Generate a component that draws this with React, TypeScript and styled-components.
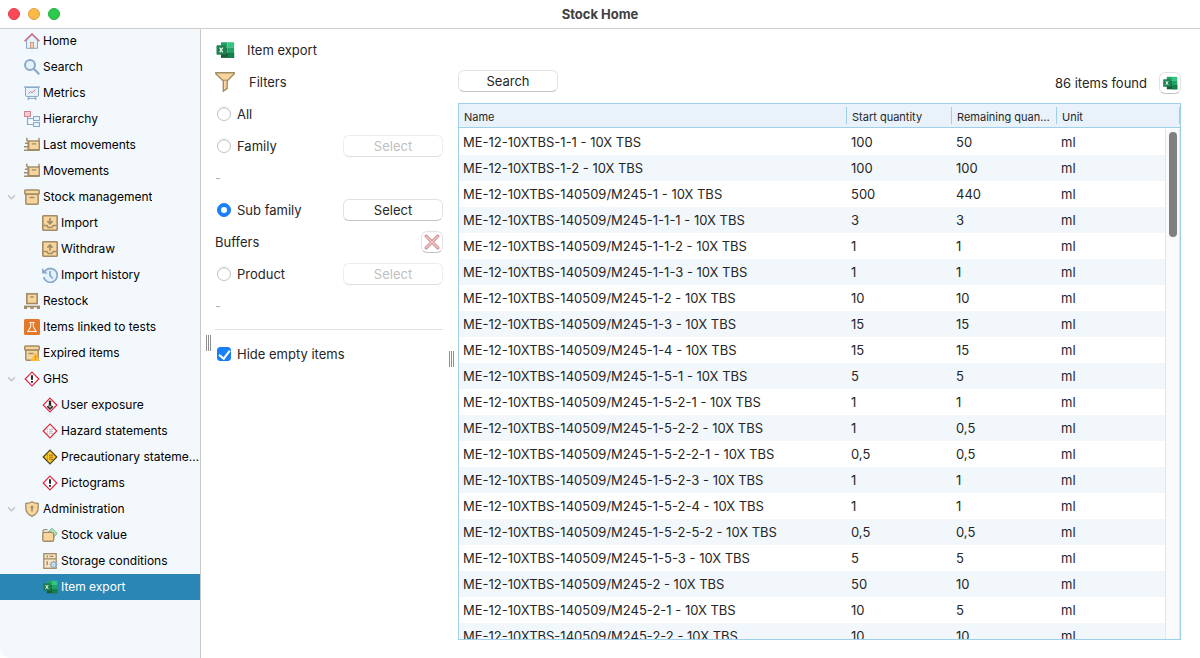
import { useState, type ReactNode } from "react";
import styled, { createGlobalStyle, css } from "styled-components";

const GlobalStyle = createGlobalStyle`
  * { box-sizing: border-box; }
  body {
    margin: 0;
    background: #ffffff;
    color: #262626;
    font-family: Inter, "Liberation Sans", sans-serif;
    font-size: 13px;
    line-height: 16px;
  }
  button, input { font: inherit; color: inherit; margin: 0; }
`;

/* ---------- window frame ---------- */

const Window = styled.div`
  display: flex;
  flex-direction: column;
  height: 100vh;
  overflow: hidden;
  border-radius: 0 0 10px 10px;
`;

const TitleBar = styled.header`
  position: relative;
  z-index: 1;
  display: grid;
  grid-template-columns: 1fr auto 1fr;
  align-items: center;
  flex: none;
  height: 28px;
  padding: 0 8px;
  background: #ffffff;
  box-shadow: 0 1px 0 #cfcfcf;
`;

const Lights = styled.div`
  display: flex;
  gap: 8px;
`;

const Light = styled.button<{ $fill: string; $edge: string }>`
  width: 12px;
  height: 12px;
  padding: 0;
  border: 1px solid ${(p) => p.$edge};
  border-radius: 50%;
  background: ${(p) => p.$fill};
`;

const WindowTitle = styled.h1`
  margin: 0;
  color: #404040;
  font-size: 13px;
  font-weight: 700;
`;

const Body = styled.div`
  display: flex;
  flex: 1;
  min-height: 0;
`;

/* ---------- sidebar ---------- */

const Sidebar = styled.nav`
  flex: none;
  width: 201px;
  border-right: 1px solid #c8c8c8;
  background: #f3f8fc;
  overflow: hidden;
`;

const NavList = styled.ul`
  margin: 0;
  padding: 0;
  list-style: none;
`;

const NavLink = styled.a<{ $nested: boolean; $active: boolean }>`
  display: flex;
  align-items: center;
  height: 26px;
  padding-left: ${(p) => (p.$nested ? 24 : 6)}px;
  color: ${(p) => (p.$active ? "#ffffff" : "#000000")};
  background: ${(p) => (p.$active ? "#2a86b5" : "transparent")};
  font-size: 12px;
  text-decoration: none;
`;

const ChevronSlot = styled.span`
  display: flex;
  flex: none;
  width: 18px;
`;

const NavText = styled.span`
  margin-left: 3px;
  overflow: hidden;
  text-overflow: ellipsis;
  white-space: nowrap;
`;

/* ---------- main area ---------- */

const Main = styled.main`
  display: flex;
  flex: 1;
  min-width: 0;
  padding: 6px 19px 6px 5px;
`;

const Content = styled.div`
  display: flex;
  flex: 1;
  flex-direction: column;
  min-width: 0;
  margin-left: 4px;
`;

const Split = styled.div`
  display: flex;
  flex: 1;
  min-height: 0;
`;

const Handle = styled.div`
  align-self: center;
  flex: none;
  width: 5px;
  height: 16px;
  border: solid #8f8f8f;
  border-width: 0 1px;
  background: linear-gradient(90deg, transparent 1px, #8f8f8f 1px, #8f8f8f 2px, transparent 2px);
  cursor: col-resize;
`;

const PageHeading = styled.h2`
  display: flex;
  align-items: center;
  flex: none;
  gap: 12px;
  height: 32px;
  margin: 0;
  font-size: 13px;
  font-weight: 400;
`;

const Filters = styled.form`
  flex: none;
  width: 228px;
  margin-right: 6px;
`;

const FiltersHeading = styled.h3`
  display: flex;
  align-items: center;
  gap: 14px;
  height: 32px;
  margin: 0;
  font-size: 13px;
  font-weight: 400;
`;

const FilterRow = styled.div`
  display: flex;
  align-items: center;
  justify-content: space-between;
  height: 32px;
`;

const Muted = styled.span`
  color: #b4b4b4;
`;

const Divider = styled.hr`
  height: 1px;
  margin: 7px 0 8px;
  border: 0;
  background: #e0e0e0;
`;

const ChoiceLabel = styled.label`
  display: flex;
  align-items: center;
  gap: 6px;
  padding-left: 2px;
`;

const choiceBox = css`
  appearance: none;
  display: grid;
  place-items: center;
  width: 14px;
  height: 14px;
  border: 1px solid #c2c2c2;
  background: #ffffff;
  box-shadow: inset 0 1px 1px #ededed;

  &:checked {
    border-color: #1a7df5;
    background: #1a80fa;
    box-shadow: none;
  }
`;

const Radio = styled.input`
  ${choiceBox}
  border-radius: 50%;

  &:checked::after {
    content: "";
    width: 6px;
    height: 6px;
    border-radius: 50%;
    background: #ffffff;
  }
`;

const Checkbox = styled.input`
  ${choiceBox}
  border-radius: 3px;

  &:checked::after {
    content: "";
    width: 5px;
    height: 9px;
    margin-bottom: 2px;
    border: solid #ffffff;
    border-width: 0 2px 2px 0;
    transform: rotate(38deg);
  }
`;

const PushButton = styled.button`
  width: 100px;
  height: 22px;
  padding: 0;
  border: 1px solid #e2e2e2;
  border-bottom-color: #c4c4c4;
  border-radius: 6px;
  background: #ffffff;

  &:disabled {
    border-color: #ededed;
    border-bottom-color: #e0e0e0;
    color: #bfbfbf;
  }
`;

const IconButton = styled.button`
  display: grid;
  place-items: center;
  flex: none;
  width: 22px;
  height: 22px;
  padding: 0;
  border: 1px solid #e2e2e2;
  border-bottom-color: #c4c4c4;
  border-radius: 6px;
  background: #ffffff;
`;

/* ---------- results ---------- */

const Results = styled.section`
  display: flex;
  flex: 1;
  flex-direction: column;
  min-width: 0;
  margin-left: 4px;
  padding-bottom: 12px;
`;

const Toolbar = styled.div`
  display: flex;
  align-items: flex-start;
  justify-content: space-between;
  height: 37px;
  padding-top: 4px;
`;

const Found = styled.div`
  display: flex;
  align-items: center;
  gap: 12px;
  padding-top: 2px;
`;

const TableFrame = styled.div`
  position: relative;
  flex: 1;
  min-height: 0;
  border: 1px solid #9fd0ea;
  overflow: hidden;
`;

const Table = styled.table`
  width: 100%;
  border-collapse: separate;
  border-spacing: 0;
  table-layout: fixed;
`;

const NameCol = styled.col``;
const QuantityCol = styled.col`
  width: 105px;
`;
const UnitCol = styled.col`
  width: 123px;
`;

const HeadCell = styled.th`
  height: 24px;
  padding: 3px 0;
  border-bottom: 1px solid #9fd0ea;
  background: #e9f2fa;
  font-size: 11px;
  font-weight: 400;
  text-align: left;
`;

const HeadText = styled.div`
  height: 17px;
  padding: 2px 5px 0;
  border-right: 1px solid #9fd0ea;
  overflow: hidden;
  text-overflow: ellipsis;
  white-space: nowrap;
`;

const Rows = styled.tbody`
  &::before {
    content: "";
    display: table-row;
    height: 1px;
  }
`;

const Row = styled.tr`
  &:nth-child(even) {
    background: #f2f7fc;
  }
`;

const Cell = styled.td`
  height: 26px;
  padding: 0 4px;
  overflow: hidden;
  white-space: nowrap;
`;

const ScrollTrack = styled.div`
  position: absolute;
  top: 25px;
  right: 0;
  bottom: 0;
  width: 15px;
  padding: 3px 2px 0 3px;
  border: solid #e6e6e6;
  border-width: 0 1px;
  background: #fafafa;
`;

const ScrollThumb = styled.div`
  width: 8px;
  height: 105px;
  border-radius: 4px;
  background: #7f7f7f;
`;

/* ---------- icons ---------- */

const IconSvg = styled.svg`
  display: block;
  flex: none;
`;

function Icon({ size = 16, children }: { size?: number; children: ReactNode }) {
  return (
    <IconSvg width={size} height={size} viewBox="0 0 16 16" fill="none" aria-hidden="true">
      {children}
    </IconSvg>
  );
}

const BLUE = "#8aa9c9";
const PALE = "#e3f3fe";
const BROWN = "#a18c67";
const SAND = "#f8d59b";
const RED = "#e0263f";

const ChevronIcon = () => (
  <IconSvg width="11" height="10" viewBox="0 0 11 10" fill="none" aria-hidden="true">
    <path d="M2 3.2 5.5 6.7 9 3.2" stroke="#c0c3c6" strokeWidth="1.4" />
  </IconSvg>
);

const HomeIcon = () => (
  <Icon>
    <path d="M2.5 7v8.3h11V7L8 1.5z" fill={PALE} stroke={BLUE} />
    <rect x="6.5" y="9.5" width="3" height="5.5" fill="#f9cfb0" stroke="#d09a80" />
    <path d="M.5 8.2 8 .9l7.5 7.3" stroke="#cf6f7c" strokeWidth="1.5" />
  </Icon>
);

const SearchIcon = () => (
  <Icon>
    <circle cx="6" cy="6" r="5" fill={PALE} stroke={BLUE} strokeWidth="2" />
    <path d="m9.8 9.8 5.5 5.500" stroke={BLUE} strokeWidth="2.2" />
  </Icon>
);

const MetricsIcon = () => (
  <Icon>
    <path d="M1.500 2.500h13V10a1.500 1.500 0 0 1-1.500 1.500H3A1.500 1.500 0 0 1 1.500 10z" fill={PALE} stroke={BLUE} />
    <path d="M0 2h16" stroke={BLUE} strokeWidth="1.200" />
    <path d="M5 12 4 15M11 12l1 3M3.500 13.500h9" stroke={BLUE} strokeWidth="1.200" />
    <path d="m4.500 8.500 2-1.800 1.500 1 3.500-3" stroke="#d5737f" />
  </Icon>
);

const HierarchyIcon = () => (
  <Icon>
    <path d="M3.500 6v7.500H9M3.500 7.500H9" stroke={BLUE} strokeWidth="1.200" />
    <rect x=".5" y=".5" width="6" height="5" fill="#fbcaca" stroke="#cc8490" />
    <rect x="9.500" y="5.500" width="6" height="4" fill={PALE} stroke={BLUE} />
    <rect x="9.500" y="11.500" width="6" height="4" fill={PALE} stroke={BLUE} />
  </Icon>
);

const MovementsIcon = () => (
  <Icon>
    <path d="M2.800.8v2.400l1.400 1.200V13M0 13.200h15.500" stroke={BROWN} strokeWidth="1.500" />
    <path d="M1 6.300h3M0 9.800h4M15 .8v3.500" stroke={BROWN} strokeWidth="1.400" />
    <rect x="4.700" y="4" width="10.600" height="8.700" fill={SAND} stroke={BROWN} strokeWidth="1.400" />
    <path d="M7.800 6.900h4.400" stroke={BROWN} strokeWidth="1.300" />
  </Icon>
);

const BoxShape = () => (
  <>
    <path d="M1.800 5h12.400v9.200a1 1 0 0 1-1 1H2.800a1 1 0 0 1-1-1z" fill={SAND} stroke={BROWN} strokeWidth="1.500" />
    <rect x=".8" y=".9" width="14.400" height="4.100" rx=".8" fill={SAND} stroke={BROWN} strokeWidth="1.500" />
  </>
);

const StockIcon = () => (
  <Icon>
    <BoxShape />
    <path d="M5.600 8.500h4.800" stroke={BROWN} strokeWidth="1.500" />
  </Icon>
);

const TrayIcon = ({ up = false }: { up?: boolean }) => (
  <Icon>
    <rect x=".8" y=".8" width="14.400" height="14.400" rx=".6" fill={SAND} stroke={BROWN} strokeWidth="1.600" />
    <path d="M1.500 10.500h3.300l1.400 1.900h3.600l1.400-1.900h3.300" stroke={BROWN} strokeWidth="1.500" />
    <path
      d={up ? "M8 9.800V4.200M5.400 6.600 8 4l2.600 2.600" : "M8 3v5.500M5.400 6.100 8 8.700l2.600-2.600"}
      stroke={BROWN}
      strokeWidth="1.700"
    />
  </Icon>
);

const HistoryIcon = () => (
  <Icon>
    <circle cx="8.300" cy="8.300" r="6.500" fill={PALE} />
    <path d="M2.500 4.700A6.900 6.900 0 1 1 1.600 10" stroke={BLUE} strokeWidth="1.800" />
    <path d="M0 1.200v5.300h5.600z" fill={BLUE} />
    <path d="M8 4v4.500l2.800 3" stroke={BLUE} strokeWidth="1.800" />
  </Icon>
);

const RestockIcon = () => (
  <Icon>
    <rect x="2.800" y=".8" width="10.400" height="9.700" fill={SAND} stroke={BROWN} strokeWidth="1.600" />
    <path d="M6.300 4h3.400" stroke={BROWN} strokeWidth="1.500" />
    <path d="M0 13.500h16" stroke={BROWN} strokeWidth="1.800" />
    <path d="M1.500 14v2M8 14v2M14.500 14v2" stroke={BROWN} strokeWidth="3" />
  </Icon>
);

const TestsIcon = () => (
  <Icon>
    <rect width="16" height="16" rx="1.500" fill="#e5772b" />
    <path d="M5.400 3.500h5.200" stroke="#fff3e6" strokeWidth="1.100" />
    <path d="M6.700 3.500v4.300L3.900 12.500h8.200L9.300 7.800V3.500" stroke="#fff3e6" strokeWidth="1.100" />
  </Icon>
);

const ExpiredIcon = () => (
  <Icon>
    <BoxShape />
    <path d="M4.500 8.500h5" stroke={BROWN} strokeWidth="1.500" />
    <path d="m11.300 7.500 4.700 8.500H6.800z" fill="#fdbb35" />
    <path d="M11.400 10.500v2.500M11.400 14v1" stroke="#d08a18" />
  </Icon>
);

const Diamond = ({ fill = "#ffffff", edge = RED }: { fill?: string; edge?: string }) => (
  <path d="M8 1.200 14.800 8 8 14.800 1.200 8z" fill={fill} stroke={edge} strokeWidth="1.200" />
);

const AlertIcon = () => (
  <Icon>
    <Diamond />
    <path d="M8 4.200v4.600M8 10v1.700" stroke="#111111" strokeWidth="1.800" />
  </Icon>
);

const ExposureIcon = () => (
  <Icon>
    <Diamond />
    <circle cx="8" cy="4.800" r="1.400" fill="#222222" />
    <path d="M6.800 6h2.400v2.500l2.300 1L8 13l-3.500-3.500 2.300-1z" fill="#222222" />
    <path d="m8 7.700.6 1.300 1.400.6-1.400.6-.6 1.300-.6-1.300-1.400-.6 1.400-.6z" fill="#bdbdbd" />
  </Icon>
);

const ListDiamondIcon = ({ fill, edge, line }: { fill?: string; edge?: string; line: string }) => (
  <Icon>
    <Diamond fill={fill} edge={edge} />
    <path
      d="M5 6.200h1M7 6.200h4M5 8.200h1M7 8.200h4M5 10.200h1M7 10.200h4"
      stroke={line}
      strokeWidth=".9"
    />
  </Icon>
);

const ShieldIcon = () => (
  <Icon>
    <path
      d="M8 .8c2 1.200 4 1.600 6.200 1.700v4.500c0 4-2.500 6.700-6.200 8.300-3.700-1.600-6.200-4.300-6.200-8.300V2.500C4 2.400 6 2 8 .8z"
      fill={SAND}
      stroke={BROWN}
      strokeWidth="1.300"
    />
    <circle cx="8" cy="5.900" r="1.500" fill={BROWN} />
    <path d="M8 6v4.500" stroke={BROWN} strokeWidth="1.500" />
  </Icon>
);

const ValueIcon = () => (
  <Icon>
    <path d="m9.800 1.200 5.500 5.300-4.300 4.200L5.500 5.500z" fill="#a9dcb7" stroke="#7dba91" />
    <path d="m10.300 4 2 2-2 2" stroke="#d5f0dc" strokeWidth="1.200" />
    <path d="M1 6V4.200a1.500 1.500 0 0 1 1.500-1.500h3" stroke={BROWN} strokeWidth="1.300" />
    <rect x=".8" y="5.400" width="10.900" height="8.900" rx="1.600" fill={SAND} stroke={BROWN} strokeWidth="1.400" />
  </Icon>
);

const StorageIcon = () => (
  <Icon>
    <rect x="1.800" y=".7" width="12.400" height="14.600" fill="#f9e4c4" stroke={BROWN} strokeWidth="1.300" />
    <path d="M2 5.900h12M5.200 2.400v2M7.500 3.400h4M5.200 8.200v4" stroke={BROWN} strokeWidth="1.400" />
    <circle cx="11.500" cy="11.700" r="3" fill={PALE} />
    <circle cx="11.500" cy="11.700" r="2.500" fill={PALE} stroke={BLUE} strokeWidth="1.200" />
    <path
      d="M11.500 7.800v1.400M11.500 14.200v1.500M7.600 11.700H9M14 11.700h1.500M8.900 9l.8.900M14.200 9l-.9.900M8.900 14.400l.9-.9M14.200 14.400l-.9-.9"
      stroke={BLUE}
      strokeWidth="1.200"
    />
    <circle cx="11.500" cy="11.700" r=".8" fill={BLUE} />
  </Icon>
);

const ExcelIcon = ({ size = 16 }: { size?: number }) => (
  <Icon size={size}>
    <path d="M4.800 1.800H10v4.100H4.800z" fill="#21a366" />
    <path d="M10 1.800h5.300v4.100H10z" fill="#33c481" />
    <path d="M4.800 5.900H10v4.200H4.800z" fill="#107c41" />
    <path d="M10 5.900h5.300v4.200H10z" fill="#21a366" />
    <path d="M4.800 10.100h10.500v4.200H4.800z" fill="#185c37" />
    <path d="M10 10.100h5.300v4.200H10z" fill="#14804a" />
    <rect x="1.200" y="4.200" width="7.600" height="7.600" rx=".6" fill="#1f8050" />
    <path d="m3.700 6.100 2.500 3.800M6.200 6.100 3.700 9.900" stroke="#e8f5ee" />
  </Icon>
);

const FunnelIcon = () => (
  <IconSvg width="20" height="20" viewBox="0 0 20 20" fill="none" aria-hidden="true">
    <path d="M.8.800h18.400v1L12.200 9v7.300l-3.900 2.900V9L.8 1.800z" fill={SAND} stroke={BROWN} strokeWidth="1.400" />
    <path d="M8 8.200h4.400" stroke={BROWN} />
  </IconSvg>
);

const ClearIcon = () => (
  <Icon>
    <path
      d="m2.200 2.200 11.600 11.600M13.800 2.200 2.200 13.800"
      stroke="#c58b90"
      strokeWidth="3.200"
      strokeLinecap="round"
    />
    <path
      d="m2.200 2.200 11.600 11.600M13.800 2.200 2.200 13.800"
      stroke="#fbc3c3"
      strokeWidth="1.500"
      strokeLinecap="round"
    />
  </Icon>
);

/* ---------- data ---------- */

type NavEntry = { label: string; icon: ReactNode; nested?: boolean; open?: boolean };

const NAV: NavEntry[] = [
  { label: "Home", icon: <HomeIcon /> },
  { label: "Search", icon: <SearchIcon /> },
  { label: "Metrics", icon: <MetricsIcon /> },
  { label: "Hierarchy", icon: <HierarchyIcon /> },
  { label: "Last movements", icon: <MovementsIcon /> },
  { label: "Movements", icon: <MovementsIcon /> },
  { label: "Stock management", icon: <StockIcon />, open: true },
  { label: "Import", icon: <TrayIcon />, nested: true },
  { label: "Withdraw", icon: <TrayIcon up />, nested: true },
  { label: "Import history", icon: <HistoryIcon />, nested: true },
  { label: "Restock", icon: <RestockIcon /> },
  { label: "Items linked to tests", icon: <TestsIcon /> },
  { label: "Expired items", icon: <ExpiredIcon /> },
  { label: "GHS", icon: <AlertIcon />, open: true },
  { label: "User exposure", icon: <ExposureIcon />, nested: true },
  { label: "Hazard statements", icon: <ListDiamondIcon line="#a5a5a5" />, nested: true },
  {
    label: "Precautionary statements",
    icon: <ListDiamondIcon fill="#fbc52d" edge="#4a4023" line="#8a6a14" />,
    nested: true,
  },
  { label: "Pictograms", icon: <AlertIcon />, nested: true },
  { label: "Administration", icon: <ShieldIcon />, open: true },
  { label: "Stock value", icon: <ValueIcon />, nested: true },
  { label: "Storage conditions", icon: <StorageIcon />, nested: true },
  { label: "Item export", icon: <ExcelIcon />, nested: true },
];

const ITEMS: [string, string, string][] = [
  ["ME-12-10XTBS-1-1 - 10X TBS", "100", "50"],
  ["ME-12-10XTBS-1-2 - 10X TBS", "100", "100"],
  ["ME-12-10XTBS-140509/M245-1 - 10X TBS", "500", "440"],
  ["ME-12-10XTBS-140509/M245-1-1-1 - 10X TBS", "3", "3"],
  ["ME-12-10XTBS-140509/M245-1-1-2 - 10X TBS", "1", "1"],
  ["ME-12-10XTBS-140509/M245-1-1-3 - 10X TBS", "1", "1"],
  ["ME-12-10XTBS-140509/M245-1-2 - 10X TBS", "10", "10"],
  ["ME-12-10XTBS-140509/M245-1-3 - 10X TBS", "15", "15"],
  ["ME-12-10XTBS-140509/M245-1-4 - 10X TBS", "15", "15"],
  ["ME-12-10XTBS-140509/M245-1-5-1 - 10X TBS", "5", "5"],
  ["ME-12-10XTBS-140509/M245-1-5-2-1 - 10X TBS", "1", "1"],
  ["ME-12-10XTBS-140509/M245-1-5-2-2 - 10X TBS", "1", "0,5"],
  ["ME-12-10XTBS-140509/M245-1-5-2-2-1 - 10X TBS", "0,5", "0,5"],
  ["ME-12-10XTBS-140509/M245-1-5-2-3 - 10X TBS", "1", "1"],
  ["ME-12-10XTBS-140509/M245-1-5-2-4 - 10X TBS", "1", "1"],
  ["ME-12-10XTBS-140509/M245-1-5-2-5-2 - 10X TBS", "0,5", "0,5"],
  ["ME-12-10XTBS-140509/M245-1-5-3 - 10X TBS", "5", "5"],
  ["ME-12-10XTBS-140509/M245-2 - 10X TBS", "50", "10"],
  ["ME-12-10XTBS-140509/M245-2-1 - 10X TBS", "10", "5"],
  ["ME-12-10XTBS-140509/M245-2-2 - 10X TBS", "10", "10"],
];

type Scope = "all" | "family" | "subfamily" | "product";

export default function App() {
  const [active, setActive] = useState("Item export");
  const [scope, setScope] = useState<Scope>("subfamily");
  const [hideEmpty, setHideEmpty] = useState(true);

  const choice = (value: Scope, label: string) => (
    <ChoiceLabel>
      <Radio type="radio" name="scope" checked={scope === value} onChange={() => setScope(value)} />
      {label}
    </ChoiceLabel>
  );

  const selectButton = (value: Scope) => (
    <PushButton type="button" disabled={scope !== value}>
      Select
    </PushButton>
  );

  return (
    <Window>
      <GlobalStyle />
      <TitleBar>
        <Lights>
          <Light $fill="#fe4a58" $edge="#e23a48" aria-label="Close" />
          <Light $fill="#fdb84a" $edge="#dfa03c" aria-label="Minimize" />
          <Light $fill="#2acb4c" $edge="#20ae3c" aria-label="Zoom" />
        </Lights>
        <WindowTitle>Stock Home</WindowTitle>
      </TitleBar>
      <Body>
        <Sidebar>
          <NavList>
            {NAV.map(({ label, icon, nested = false, open = false }) => (
              <li key={label}>
                <NavLink href="#" $nested={nested} $active={label === active} onClick={() => setActive(label)}>
                  <ChevronSlot>{open && <ChevronIcon />}</ChevronSlot>
                  {icon}
                  <NavText>{label}</NavText>
                </NavLink>
              </li>
            ))}
          </NavList>
        </Sidebar>
        <Main>
          <Handle />
          <Content>
            <PageHeading>
              <ExcelIcon size={20} />
              Item export
            </PageHeading>
            <Split>
              <Filters>
                <FiltersHeading>
                  <FunnelIcon />
                  Filters
                </FiltersHeading>
                <FilterRow>{choice("all", "All")}</FilterRow>
                <FilterRow>
                  {choice("family", "Family")}
                  {selectButton("family")}
                </FilterRow>
                <FilterRow>
                  <Muted>-</Muted>
                </FilterRow>
                <FilterRow>
                  {choice("subfamily", "Sub family")}
                  {selectButton("subfamily")}
                </FilterRow>
                <FilterRow>
                  Buffers
                  <IconButton type="button" aria-label="Clear sub family">
                    <ClearIcon />
                  </IconButton>
                </FilterRow>
                <FilterRow>
                  {choice("product", "Product")}
                  {selectButton("product")}
                </FilterRow>
                <FilterRow>
                  <Muted>-</Muted>
                </FilterRow>
                <Divider />
                <FilterRow>
                  <ChoiceLabel>
                    <Checkbox
                      type="checkbox"
                      checked={hideEmpty}
                      onChange={(event) => setHideEmpty(event.target.checked)}
                    />
                    Hide empty items
                  </ChoiceLabel>
                </FilterRow>
              </Filters>
              <Handle />
              <Results>
                <Toolbar>
                  <PushButton type="button">Search</PushButton>
                  <Found>
                    86 items found
                    <IconButton type="button" aria-label="Export to spreadsheet">
                      <ExcelIcon />
                    </IconButton>
                  </Found>
                </Toolbar>
                <TableFrame>
                  <Table>
                    <colgroup>
                      <NameCol />
                      <QuantityCol />
                      <QuantityCol />
                      <UnitCol />
                    </colgroup>
                    <thead>
                      <tr>
                        {["Name", "Start quantity", "Remaining quantity", "Unit"].map((title) => (
                          <HeadCell key={title}>
                            <HeadText>{title}</HeadText>
                          </HeadCell>
                        ))}
                      </tr>
                    </thead>
                    <Rows>
                      {ITEMS.map(([name, start, remaining]) => (
                        <Row key={name}>
                          <Cell>{name}</Cell>
                          <Cell>{start}</Cell>
                          <Cell>{remaining}</Cell>
                          <Cell>ml</Cell>
                        </Row>
                      ))}
                    </Rows>
                  </Table>
                  <ScrollTrack>
                    <ScrollThumb />
                  </ScrollTrack>
                </TableFrame>
              </Results>
            </Split>
          </Content>
        </Main>
      </Body>
    </Window>
  );
}
